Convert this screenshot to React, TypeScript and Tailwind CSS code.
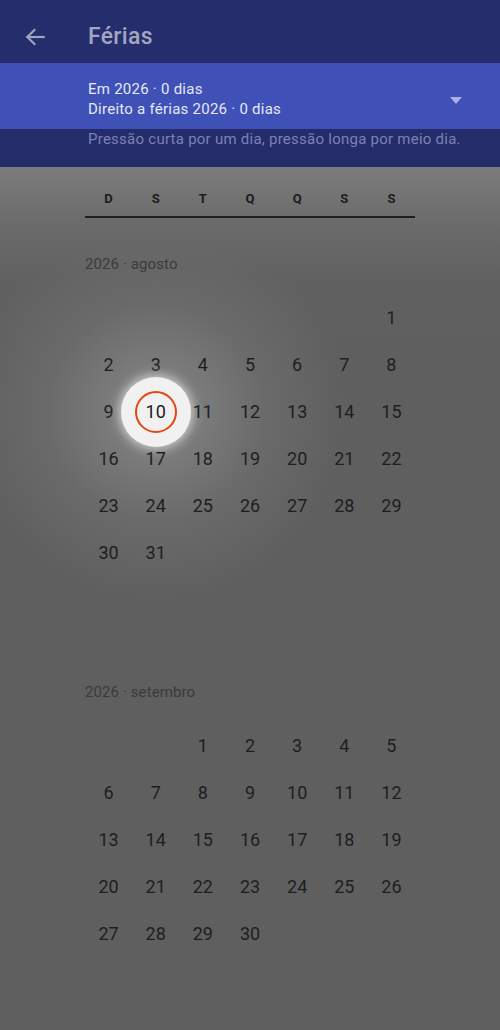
import React from "react";

const WEEK = ["D", "S", "T", "Q", "Q", "S", "S"];

function buildMonth(offset: number, days: number): (number | null)[] {
  const cells: (number | null)[] = [];
  for (let i = 0; i < offset; i++) cells.push(null);
  for (let d = 1; d <= days; d++) cells.push(d);
  while (cells.length % 7 !== 0) cells.push(null);
  return cells;
}

function Month({
  label,
  offset,
  days,
  highlight,
  labelMt,
}: {
  label: string;
  offset: number;
  days: number;
  highlight?: number;
  labelMt: string;
}) {
  const cells = buildMonth(offset, days);
  return (
    <div className={labelMt}>
      <div className="h-[20px] leading-[20px] text-[15px] tracking-[0.1px] text-[#3b3b3b]">{label}</div>
      <div className="mt-[20px] grid grid-cols-7">
        {cells.map((d, i) => (
          <div key={i} className="relative h-[47px] flex items-center justify-center">
            {d === highlight && d !== null ? (
              <>
                <div className="absolute left-1/2 top-1/2 -translate-x-1/2 -translate-y-1/2 w-[70px] h-[70px] rounded-full bg-[#f1f1f1] shadow-[0_0_10px_3px_rgba(255,255,255,0.55)]" />
                <div className="absolute left-1/2 top-1/2 -translate-x-1/2 -translate-y-1/2 w-[42px] h-[42px] rounded-full border-[2.5px] border-[#e8440f]" />
                <span className="relative text-[18px] text-[#1a1a1a]">{d}</span>
              </>
            ) : (
              <span className="text-[18px] text-[#1e1e1e]">{d ?? ""}</span>
            )}
          </div>
        ))}
      </div>
    </div>
  );
}

export default function App() {
  return (
    <div
      className="relative w-[500px] h-[1030px] overflow-hidden bg-[#5f5f5f]"
      style={{ fontFamily: "Roboto, 'Noto Sans', sans-serif" }}
    >
      {/* header */}
      <div className="h-[63px] bg-[#262d6d] flex items-center">
        <svg
          className="ml-[22px] mt-[10px]"
          width="26"
          height="26"
          viewBox="0 0 24 24"
          fill="none"
          stroke="#a2a5be"
          strokeWidth="2"
          strokeLinecap="square"
        >
          <path d="M20 12H5" />
          <path d="M11.5 5.5L5 12l6.5 6.5" />
        </svg>
        <div className="ml-[40px] mt-[10px] text-[23px] tracking-[0.3px] font-medium text-[#a3a6bf] leading-[28px]">
          Férias
        </div>
      </div>
      {/* band */}
      <div className="h-[66px] bg-[#3f51b7] flex items-start pl-[88px] pr-[38px] pt-[16px]">
        <div className="flex-1 text-[15px] tracking-[0.25px] leading-[20px] text-[#e6e8f6]">
          <div>Em 2026 · 0 dias</div>
          <div>Direito a férias 2026 · 0 dias</div>
        </div>
        <svg className="mt-[18px]" width="12" height="7" viewBox="0 0 12 7">
          <path d="M0 0h12L6 7z" fill="#a9b1ec" />
        </svg>
      </div>
      {/* hint */}
      <div className="h-[38px] bg-[#252c6a] pl-[88px] text-[15px] tracking-[0.25px] leading-[20px] text-[#7a82b6]">
        Pressão curta por um dia, pressão longa por meio dia.
      </div>
      {/* content */}
      <div className="relative h-[863px] bg-[linear-gradient(to_bottom,#7c7c7c_0px,#6a6a6a_60px,#616161_110px,#5f5f5f_200px)]">
        <div className="absolute inset-0 bg-[radial-gradient(circle_at_156px_245px,#8a8a8a_0px,#7a7a7a_50px,#6a6a6a_110px,rgba(95,95,95,0)_190px)]" />
        <div className="relative mx-[85px] pt-[22px]">
          <div className="grid grid-cols-7 h-[20px] leading-[20px]">
            {WEEK.map((w, i) => (
              <div key={i} className="text-center text-[13px] font-bold text-[#1c1c1c]">
                {w}
              </div>
            ))}
          </div>
          <div className="mt-[7px] h-[2px] bg-[#1f1f1f]" />
          <Month label="2026 · agosto" offset={6} days={31} highlight={10} labelMt="mt-[36px]" />
          <Month label="2026 · setembro" offset={2} days={30} labelMt="mt-[106px]" />
        </div>
      </div>
    </div>
  );
}
